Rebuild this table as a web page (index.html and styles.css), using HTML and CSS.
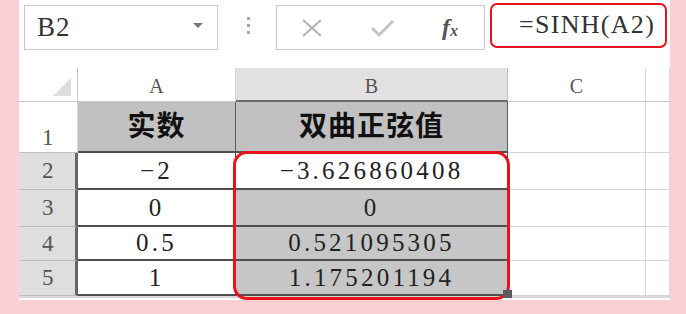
FILE: index.html
```html
<!DOCTYPE html>
<html lang="zh-CN">
<head>
    <meta charset="UTF-8">
    <title>SINH</title>
    <link rel="stylesheet" href="styles.css">
</head>
<body>
    <div class="sheet">
        <div class="toolbar">
            <div class="name-box">
                <span>B2</span>
                <span class="caret"></span>
            </div>
            <div class="grip"><i></i><i></i><i></i></div>
            <div class="fn-box">
                <svg class="icon icon-x" width="22" height="20" viewBox="0 0 22 20">
                    <path d="M2 2 L20 18 M20 2 L2 18" stroke="#b4b4b4" stroke-width="2.2" fill="none"/>
                </svg>
                <svg class="icon icon-ok" width="25" height="20" viewBox="0 0 25 20">
                    <path d="M2 10 L9 17 L23 3" stroke="#c4c4c4" stroke-width="3" fill="none"/>
                </svg>
                <span class="fx">f<sub>x</sub></span>
            </div>
            <div class="formula">=SINH(A2)</div>
        </div>

        <div class="grid-wrap">
            <div class="grid">
                <div class="cell corner"><span class="tri"></span></div>
                <div class="cell col-head">A</div>
                <div class="cell col-head active">B</div>
                <div class="cell col-head">C</div>
                <div class="cell col-head"></div>

                <div class="cell row-head first">1</div>
                <div class="cell title">实数</div>
                <div class="cell title">双曲正弦值</div>
                <div class="cell"></div>
                <div class="cell"></div>

                <div class="cell row-head active">2</div>
                <div class="cell data">−2</div>
                <div class="cell data">−3.626860408</div>
                <div class="cell"></div>
                <div class="cell"></div>

                <div class="cell row-head active">3</div>
                <div class="cell data">0</div>
                <div class="cell data picked">0</div>
                <div class="cell"></div>
                <div class="cell"></div>

                <div class="cell row-head active">4</div>
                <div class="cell data">0.5</div>
                <div class="cell data picked">0.521095305</div>
                <div class="cell"></div>
                <div class="cell"></div>

                <div class="cell row-head active">5</div>
                <div class="cell data">1</div>
                <div class="cell data picked">1.175201194</div>
                <div class="cell"></div>
                <div class="cell"></div>
            </div>
            <div class="mark"></div>
            <div class="handle"></div>
        </div>
    </div>
</body>
</html>
```

FILE: styles.css
```css
body {
    margin: 0;
    background: #fcd0d3;
    overflow: hidden;
}

.sheet {
    margin-left: 19px;
    width: 651px;
    height: 300px;
    background: #fff;
    font-family: "Liberation Serif", "DejaVu Serif", serif;
    color: #333;
}

/* formula bar */
.toolbar {
    display: flex;
    align-items: flex-start;
    height: 68px;
}

.name-box {
    box-sizing: border-box;
    margin: 5px 0 0 5px;
    width: 194px;
    height: 45px;
    border: 1px solid #c9c9c9;
    display: flex;
    align-items: center;
    justify-content: space-between;
    padding: 0 14px 0 12px;
    font-size: 27px;
    letter-spacing: 1px;
}

.caret {
    width: 0;
    height: 0;
    border-left: 5px solid transparent;
    border-right: 5px solid transparent;
    border-top: 5px solid #777;
    margin-bottom: 4px;
}

.grip {
    margin: 17px 26px 0 29px;
    display: flex;
    flex-direction: column;
    gap: 4px;
}

.grip i {
    display: block;
    width: 3px;
    height: 3px;
    background: #a8a8a8;
}

.fn-box {
    box-sizing: border-box;
    margin-top: 5px;
    width: 209px;
    height: 45px;
    border: 1px solid #c9c9c9;
    display: flex;
    align-items: center;
    padding-left: 24px;
}

.icon-ok {
    margin-left: 47px;
}

.fx {
    margin-left: 47px;
    font-style: italic;
    font-weight: bold;
    font-size: 24px;
    color: #555;
}

.fx sub {
    font-size: 16px;
    vertical-align: -1px;
}

.formula {
    box-sizing: border-box;
    margin: 3px 0 0 5px;
    width: 177px;
    height: 45px;
    border: 2.5px solid #e3121c;
    border-radius: 7px;
    padding: 0 0 2px 27px;
    display: flex;
    align-items: center;
    font-size: 26px;
    letter-spacing: 1.3px;
    color: #333;
}

/* worksheet */
.grid-wrap {
    position: relative;
}

.grid {
    display: grid;
    grid-template-columns: 59px 158px 272px 138px 24px;
    grid-template-rows: 34px 51px 37px 37px 34px 35px;
    border-bottom: 2px solid #d8d8d8;
}

.cell {
    box-sizing: border-box;
    border-right: 1px solid #d6d6d6;
    border-bottom: 1px solid #d6d6d6;
    display: flex;
    align-items: center;
    justify-content: center;
    font-size: 25px;
    letter-spacing: 3.2px;
}

.corner {
    position: relative;
    border-right-color: #c8c8c8;
    border-bottom-color: #c8c8c8;
}

.tri {
    position: absolute;
    right: 6px;
    bottom: 5px;
    width: 0;
    height: 0;
    border-left: 18px solid transparent;
    border-bottom: 18px solid #dcdcdc;
}

.col-head {
    font-size: 20px;
    letter-spacing: 0;
    color: #555;
    padding-top: 4px;
    border-bottom-color: #c8c8c8;
}

.col-head.active {
    background: #e1e1e1;
    border-bottom: 2px solid #6a6a6a;
    border-right-color: #bdbdbd;
}

.row-head {
    font-size: 23px;
    letter-spacing: 0;
    color: #555;
    justify-content: flex-start;
    padding-left: 23px;
    border-bottom-color: #c2c2c2;
}

.row-head.first {
    align-items: flex-end;
    padding-bottom: 1px;
}

.row-head.active {
    background: #dedede;
    border-right: 3px solid #666;
    border-bottom-color: #bdbdbd;
}

.title {
    background: #c1c1c1;
    font-family: "Noto Sans CJK SC", "Noto Sans", sans-serif;
    font-weight: bold;
    font-size: 28px;
    letter-spacing: 1px;
    color: #111;
    padding-bottom: 6px;
    border-right: 1px solid #5a5a5a;
    border-bottom: 2px solid #4e4e4e;
}

.data {
    color: #222;
    border-right: 1px solid #4e4e4e;
    border-bottom: 2px solid #4e4e4e;
}

.data.picked {
    background: #c6c6c6;
}

/* selection outline and fill handle */
.mark {
    position: absolute;
    left: 214px;
    top: 83px;
    width: 277px;
    height: 149px;
    box-sizing: border-box;
    border: 3px solid #e8121a;
    border-radius: 14px;
}

.handle {
    position: absolute;
    left: 484px;
    top: 222px;
    width: 9px;
    height: 8px;
    background: #5c5c5c;
}
```
